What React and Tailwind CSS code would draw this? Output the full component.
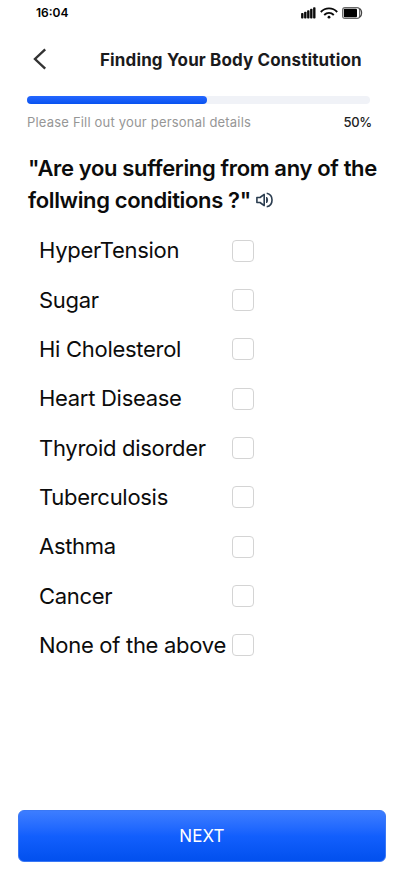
import React, { useState } from "react";

const CONDITIONS = [
  "HyperTension",
  "Sugar",
  "Hi Cholesterol",
  "Heart Disease",
  "Thyroid disorder",
  "Tuberculosis",
  "Asthma",
  "Cancer",
  "None of the above",
];

function StatusBar() {
  return (
    <div className="flex h-[26px] items-center justify-between pl-9 pr-[41px]">
      <span className="text-[12px] font-semibold leading-none text-black">16:04</span>
      <div className="flex items-center">
        <svg width="15" height="12" viewBox="0 0 15 12" fill="#0a0a0a">
          <rect x="0.1" y="6" width="2.4" height="5.6" rx="0.8" />
          <rect x="3.1" y="4.8" width="2.4" height="6.8" rx="0.8" />
          <rect x="6.1" y="3.3" width="2.4" height="8.3" rx="0.8" />
          <rect x="9.1" y="1.8" width="2.4" height="9.8" rx="0.8" />
          <rect x="12.1" y="0.2" width="2.4" height="11.4" rx="0.8" />
        </svg>
        <svg className="ml-[4px]" width="18" height="12" viewBox="0 0 18 12" fill="none" stroke="#0a0a0a" strokeWidth="1.9">
          <path d="M0.8 5C5.4 0.2 12.6 0.2 17.2 5" />
          <path d="M4.2 8C7 5.4 11 5.4 13.8 8" />
          <circle cx="9" cy="10.2" r="1.4" fill="#0a0a0a" stroke="none" />
        </svg>
        <svg className="ml-[4px]" width="21" height="12" viewBox="0 0 21 12">
          <rect x="0.6" y="0.6" width="17" height="10.8" rx="2.4" fill="none" stroke="#666" strokeWidth="1.1" />
          <rect x="1.8" y="1.8" width="13.2" height="8.4" rx="1" fill="#000" />
          <path d="M17.4 1.5C20.3 3 20.3 9 17.4 10.5" fill="none" stroke="#444" strokeWidth="1.3" />
        </svg>
      </div>
    </div>
  );
}

function SpeakerIcon() {
  return (
    <svg className="ml-[5px] inline-block align-[0px]" width="17" height="16" viewBox="0 0 17 16" fill="none" stroke="#2b3d50" strokeWidth="1.6">
      <path d="M0.9 5.5H4L8.2 2.4V13.6L4 10.5H0.9Z" strokeLinejoin="round" />
      <path d="M10.5 5V11C12 9.8 12 6.2 10.5 5Z" fill="#2b3d50" strokeWidth="0.9" />
      <path d="M10.7 1.2C17.8 2.5 17.8 13.5 10.7 14.8" />
    </svg>
  );
}

function App() {
  const [checked, setChecked] = useState({});
  const progress = 52.4;

  return (
    <div className="flex h-[873px] w-[404px] flex-col overflow-hidden bg-white font-['Inter',sans-serif] text-[#0c0c0c]">
      <StatusBar />

      <header className="flex h-[66px] items-center pl-[33px]">
        <button aria-label="Back">
          <svg width="14" height="22" viewBox="0 0 14 22" fill="none" stroke="#333" strokeWidth="2.4">
            <path d="M12.2 1.3L2 11L12.2 20.7" />
          </svg>
        </button>
        <h1 className="ml-[53px] whitespace-nowrap pt-[3px] text-[17px] font-bold tracking-[0.13px] text-[#1a1a1c]">
          Finding Your Body Constitution
        </h1>
      </header>

      {/* Progress */}
      <div className="ml-[27px] mt-1 h-2 w-[343px] rounded-full bg-[#f0f2f7]">
        <div
          className="h-2 rounded-full bg-linear-to-b from-[#2467ff] to-[#0752f0]"
          style={{ width: `${progress}%` }}
        />
      </div>
      <div className="flex h-9 items-center justify-between pl-[27px] pr-8 pt-px">
        <span className="text-[13px] tracking-[0.19px] text-[#969696]">Please Fill out your personal details</span>
        <span className="text-[13px] font-medium tracking-[-0.3px] text-[#222]">50%</span>
      </div>

      <h2 className="ml-7 mt-3 whitespace-nowrap text-[22px] font-semibold leading-8 tracking-[-0.35px]">
        "Are you suffering from any of the
        <br />
        follwing conditions ?"
        <SpeakerIcon />
      </h2>

      <div className="mt-2.5 flex flex-col">
        {CONDITIONS.map((name) => (
          <label key={name} className="flex h-[49.35px] items-center pl-[39px]">
            <span className="w-[193px] whitespace-nowrap text-[22px] tracking-[-0.29px]">{name}</span>
            <input
              type="checkbox"
              className="h-[22px] w-[22px] appearance-none rounded-[4px] border border-[#d4d4d4] bg-white checked:bg-[#1260ff]"
              checked={!!checked[name]}
              onChange={() => setChecked({ ...checked, [name]: !checked[name] })}
            />
          </label>
        ))}
      </div>

      <button className="mx-[18px] mb-[11px] mt-auto h-[52px] rounded-[6px] border border-[#3a78f5] bg-linear-to-b from-[#3d7dff] via-[#125ffd] to-[#0250ee] pt-0.5 text-[17px] tracking-[0.1px] text-white">
        NEXT
      </button>
    </div>
  );
}

export default App;
